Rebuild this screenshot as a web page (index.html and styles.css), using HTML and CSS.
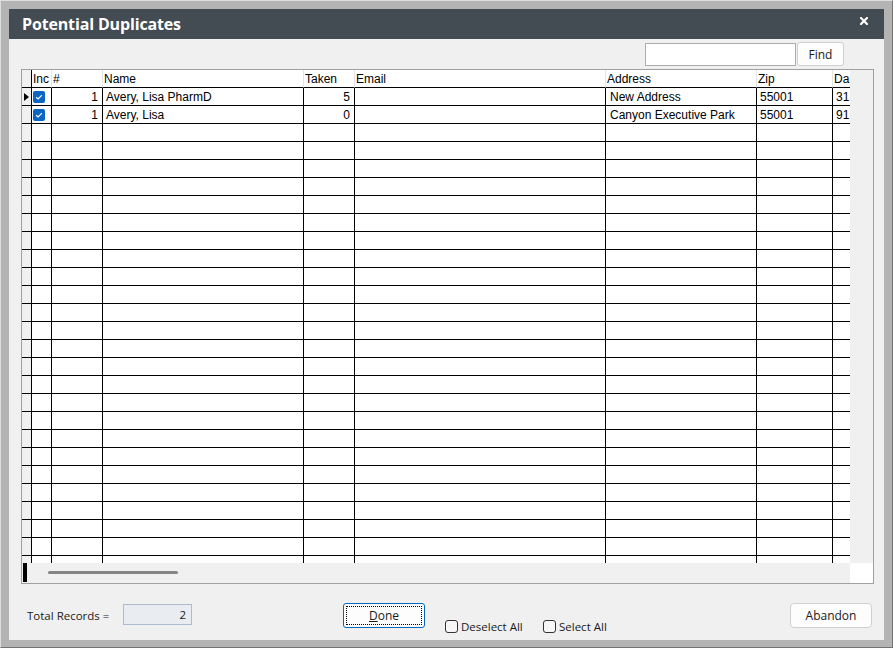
FILE: index.html
```html
<!DOCTYPE html>
<html lang="en">
<head>
<meta charset="utf-8">
<title>Potential Duplicates</title>
<link rel="stylesheet" href="styles.css">
</head>
<body>
<div class="frame">
  <div class="window">
    <div class="titlebar">
      <div class="title">Potential Duplicates</div>
      <svg class="close" viewBox="0 0 8 8" width="8" height="8"><path d="M1 1 L7 7 M7 1 L1 7" stroke="#fff" stroke-width="2.2" stroke-linecap="square"/></svg>
    </div>

    <div class="searchbar">
      <div class="search-input"></div>
      <div class="btn find-btn">Find</div>
    </div>

    <div class="grid">
      <div class="data">
        <div class="row head">
          <span class="ind"></span><span>Inc</span><span>#</span><span>Name</span><span>Taken</span><span>Email</span><span>Address</span><span>Zip</span><span>Da</span>
        </div>
        <div class="row">
          <span class="ind"><i class="cur"></i></span><span class="inc"><i class="cb"><svg viewBox="0 0 12 12" width="12" height="12"><path d="M3.2 6.2 L5.1 8 L8.9 4.2" stroke="#fff" stroke-width="1.2" fill="none"/></svg></i></span><span class="num">1</span><span>Avery, Lisa PharmD</span><span class="num">5</span><span></span><span class="addr">New Address</span><span>55001</span><span>31</span>
        </div>
        <div class="row">
          <span class="ind"></span><span class="inc"><i class="cb"><svg viewBox="0 0 12 12" width="12" height="12"><path d="M3.2 6.2 L5.1 8 L8.9 4.2" stroke="#fff" stroke-width="1.2" fill="none"/></svg></i></span><span class="num">1</span><span>Avery, Lisa</span><span class="num">0</span><span></span><span class="addr">Canyon Executive Park</span><span>55001</span><span>91</span>
        </div>
        <div class="row"><span class="ind"></span><span></span><span></span><span></span><span></span><span></span><span></span><span></span><span></span></div>
        <div class="row"><span class="ind"></span><span></span><span></span><span></span><span></span><span></span><span></span><span></span><span></span></div>
        <div class="row"><span class="ind"></span><span></span><span></span><span></span><span></span><span></span><span></span><span></span><span></span></div>
        <div class="row"><span class="ind"></span><span></span><span></span><span></span><span></span><span></span><span></span><span></span><span></span></div>
        <div class="row"><span class="ind"></span><span></span><span></span><span></span><span></span><span></span><span></span><span></span><span></span></div>
        <div class="row"><span class="ind"></span><span></span><span></span><span></span><span></span><span></span><span></span><span></span><span></span></div>
        <div class="row"><span class="ind"></span><span></span><span></span><span></span><span></span><span></span><span></span><span></span><span></span></div>
        <div class="row"><span class="ind"></span><span></span><span></span><span></span><span></span><span></span><span></span><span></span><span></span></div>
        <div class="row"><span class="ind"></span><span></span><span></span><span></span><span></span><span></span><span></span><span></span><span></span></div>
        <div class="row"><span class="ind"></span><span></span><span></span><span></span><span></span><span></span><span></span><span></span><span></span></div>
        <div class="row"><span class="ind"></span><span></span><span></span><span></span><span></span><span></span><span></span><span></span><span></span></div>
        <div class="row"><span class="ind"></span><span></span><span></span><span></span><span></span><span></span><span></span><span></span><span></span></div>
        <div class="row"><span class="ind"></span><span></span><span></span><span></span><span></span><span></span><span></span><span></span><span></span></div>
        <div class="row"><span class="ind"></span><span></span><span></span><span></span><span></span><span></span><span></span><span></span><span></span></div>
        <div class="row"><span class="ind"></span><span></span><span></span><span></span><span></span><span></span><span></span><span></span><span></span></div>
        <div class="row"><span class="ind"></span><span></span><span></span><span></span><span></span><span></span><span></span><span></span><span></span></div>
        <div class="row"><span class="ind"></span><span></span><span></span><span></span><span></span><span></span><span></span><span></span><span></span></div>
        <div class="row"><span class="ind"></span><span></span><span></span><span></span><span></span><span></span><span></span><span></span><span></span></div>
        <div class="row"><span class="ind"></span><span></span><span></span><span></span><span></span><span></span><span></span><span></span><span></span></div>
        <div class="row"><span class="ind"></span><span></span><span></span><span></span><span></span><span></span><span></span><span></span><span></span></div>
        <div class="row"><span class="ind"></span><span></span><span></span><span></span><span></span><span></span><span></span><span></span><span></span></div>
        <div class="row"><span class="ind"></span><span></span><span></span><span></span><span></span><span></span><span></span><span></span><span></span></div>
        <div class="row"><span class="ind"></span><span></span><span></span><span></span><span></span><span></span><span></span><span></span><span></span></div>
        <div class="row"><span class="ind"></span><span></span><span></span><span></span><span></span><span></span><span></span><span></span><span></span></div>
        <div class="row"><span class="ind"></span><span></span><span></span><span></span><span></span><span></span><span></span><span></span><span></span></div>
        <div class="row"><span class="ind"></span><span></span><span></span><span></span><span></span><span></span><span></span><span></span><span></span></div>
        <div class="row"><span class="ind"></span><span></span><span></span><span></span><span></span><span></span><span></span><span></span><span></span></div>
        <div class="row"><span class="ind"></span><span></span><span></span><span></span><span></span><span></span><span></span><span></span><span></span></div>
      </div>
      <div class="vstrip"></div>
      <div class="hscroll">
        <span class="splitter"></span>
        <span class="thumb"></span>
      </div>
      <div class="corner"></div>
    </div>

    <div class="bottombar">
      <div class="total-label">Total Records =</div>
      <div class="total-box">2</div>
      <div class="btn done-btn"><u>D</u>one</div>
      <label class="check-group deselect"><span class="checkbox"></span>Deselect All</label>
      <label class="check-group"><span class="checkbox"></span>Select All</label>
      <div class="btn abandon-btn">Abandon</div>
    </div>
  </div>
</div>
</body>
</html>
```
FILE: styles.css
```css
* { box-sizing: border-box; }
html, body { margin: 0; padding: 0; }
body {
  width: 893px;
  height: 648px;
  overflow: hidden;
  font-family: "Open Sans", "Noto Sans", sans-serif;
  font-size: 11px;
  color: #1a1a1a;
}

.frame {
  width: 893px;
  height: 648px;
  background: #b4b4b4;
  border-top: 1px solid #dedede;
  border-left: 1px solid #dedede;
  border-right: 1px solid #747474;
  border-bottom: 1px solid #747474;
  padding: 8px 8px 7px 8px;
}

.window {
  width: 875px;
  height: 631px;
  background: #f0f0f0;
  display: flex;
  flex-direction: column;
}

.titlebar {
  height: 30px;
  flex: none;
  background: #434b53;
  display: flex;
  align-items: center;
  padding: 0 16px 0 13px;
  color: #fff;
}
.title {
  flex: 1;
  font-weight: 700;
  font-size: 16px;
  letter-spacing: -0.15px;
}
.close { display: block; margin-top: -6px; }

.searchbar {
  display: flex;
  justify-content: flex-end;
  align-items: flex-end;
  height: 24px;
  margin-top: 3px;
  padding-right: 40px;
  gap: 1px;
  flex: none;
}
.search-input {
  width: 151px;
  height: 23px;
  border: 1px solid #adadad;
  background: #fff;
}

.btn {
  display: flex;
  align-items: center;
  justify-content: center;
  background: #fdfdfd;
  border: 1px solid #d0d0d0;
  border-radius: 4px;
  font-size: 12px;
  color: #1a1a1a;
}
.find-btn { width: 47px; height: 24px; border-radius: 3px; }

.grid {
  flex: none;
  margin: 3px 10px 0 12px;
  height: 515px;
  border: 1px solid #a0a0a0;
  display: grid;
  grid-template-columns: 1fr 23px;
  grid-template-rows: 493px 20px;
  background: #f0f0f0;
}

.data {
  background: #fff;
  overflow: hidden;
  font-family: "Liberation Sans", Arial, sans-serif;
  font-size: 12px;
  color: #000;
}
.row {
  display: grid;
  grid-template-columns: 10px 20px 51px 201px 51px 251px 151px 76px 150px;
  height: 18px;
  flex: none;
}
.row > span {
  display: block;
  border-right: 1px solid #000;
  border-bottom: 1px solid #000;
  line-height: 19px;
  padding: 0 3px;
  white-space: nowrap;
  overflow: hidden;
}
.row > span.ind { background: #f0f0f0; padding: 0; }
.row > span.inc { padding: 0; }
.row > span.num { text-align: right; padding-right: 4px; }
.row > span.addr { padding-left: 4px; }

.head > span { border-right-color: #e4e4e4; padding: 0 1px; }
.head > span.ind { border-right-color: #000; }

.cur {
  display: block;
  width: 0;
  height: 0;
  margin: 5px 0 0 2px;
  border-left: 5px solid #000;
  border-top: 4px solid transparent;
  border-bottom: 4px solid transparent;
}
.cb {
  display: block;
  width: 12px;
  height: 12px;
  margin: 3px 0 0 1px;
  background: #0a66c2;
  border-radius: 2px;
}
.cb svg { display: block; }

.vstrip { background: #f0f0f0; }
.hscroll {
  background: #f0f0f0;
  display: flex;
  align-items: flex-start;
}
.splitter {
  width: 4px;
  height: 19px;
  margin-left: 1px;
  background: #000;
}
.thumb {
  width: 130px;
  height: 3px;
  margin: 8px 0 0 21px;
  background: #858585;
  border-radius: 2px;
}
.corner { background: #fff; }

.bottombar {
  flex: none;
  display: flex;
  align-items: flex-start;
  height: 31px;
  margin-top: 19px;
  padding: 0 12px 0 18px;
}
.total-label {
  width: 96px;
  height: 25px;
  line-height: 25px;
  font-size: 11.5px;
}
.total-box {
  width: 69px;
  height: 21px;
  margin-top: 1px;
  border: 1px solid #a9bcd2;
  background: #e9ecf0;
  text-align: right;
  padding-right: 5px;
  line-height: 19px;
  font-size: 11.5px;
}
.done-btn {
  width: 82px;
  height: 25px;
  margin-left: 151px;
  border: 1px solid #0067c0;
  border-radius: 3px;
  outline: 1px dotted #000;
  outline-offset: -4px;
}
.check-group {
  display: flex;
  align-items: center;
  gap: 3px;
  margin-top: 16px;
  height: 15px;
  font-size: 11.5px;
}
.check-group.deselect { width: 98px; margin-left: 20px; }
.checkbox {
  width: 13px;
  height: 13px;
  border: 1px solid #333;
  border-radius: 3px;
  background: #f7f7f7;
}
.abandon-btn {
  width: 82px;
  height: 25px;
  margin-left: auto;
}
```
